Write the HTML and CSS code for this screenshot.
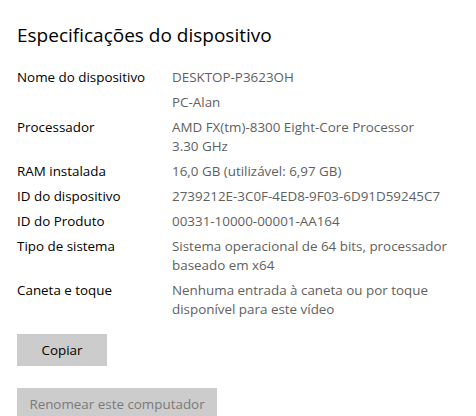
FILE: index.html
```html
<!DOCTYPE html>
<html>
<head>
  <title>Especificações do dispositivo</title>
  <link rel="stylesheet" href="styles.css">
</head>
<body>
  <div class="page">
    <h1 class="title">Especificações do dispositivo</h1>
    <dl class="specs">
      <dt>Nome do dispositivo</dt>
      <dd>DESKTOP-P3623OH</dd>
      <dt></dt>
      <dd>PC-Alan</dd>
      <dt>Processador</dt>
      <dd>AMD FX(tm)-8300 Eight-Core Processor 3.30&nbsp;GHz</dd>
      <dt>RAM instalada</dt>
      <dd>16,0 GB (utilizável: 6,97 GB)</dd>
      <dt>ID do dispositivo</dt>
      <dd>2739212E-3C0F-4ED8-9F03-6D91D59245C7</dd>
      <dt>ID do Produto</dt>
      <dd>00331-10000-00001-AA164</dd>
      <dt>Tipo de sistema</dt>
      <dd>Sistema operacional de 64 bits, processador baseado em x64</dd>
      <dt>Caneta e toque</dt>
      <dd>Nenhuma entrada à caneta ou por toque disponível para este vídeo</dd>
    </dl>
    <div class="actions">
      <button class="btn btn-copy">Copiar</button>
      <button class="btn btn-rename" disabled>Renomear este computador</button>
    </div>
  </div>
</body>
</html>
```

FILE: styles.css
```css
/* Settings page */
body {
  margin: 0;
  background-color: #ffffff;
  font-family: "Open Sans", "Noto Sans", sans-serif;
  color: #000000;
}

.page {
  padding: 21px 0 0 17px;
}

.title {
  margin: 0;
  font-size: 19px;
  font-weight: 400;
  line-height: 28px;
}

.specs {
  display: grid;
  grid-template-columns: 155px 275px;
  row-gap: 6px;
  margin: 19px 0 0 0;
  font-size: 13.4px;
  line-height: 19px;
}

.specs dt {
  margin: 0;
}

.specs dd {
  margin: 0;
  color: #5f5f5f;
}

.actions {
  display: flex;
  flex-direction: column;
  align-items: flex-start;
  gap: 22px;
  margin-top: 15px;
}

.btn {
  height: 32px;
  padding: 0;
  border: none;
  background-color: #cccccc;
  font-family: inherit;
  font-size: 13.4px;
  color: #000000;
}

.btn-copy {
  width: 90px;
}

.btn-rename {
  width: 200px;
  color: #7a7a7a;
}
```
